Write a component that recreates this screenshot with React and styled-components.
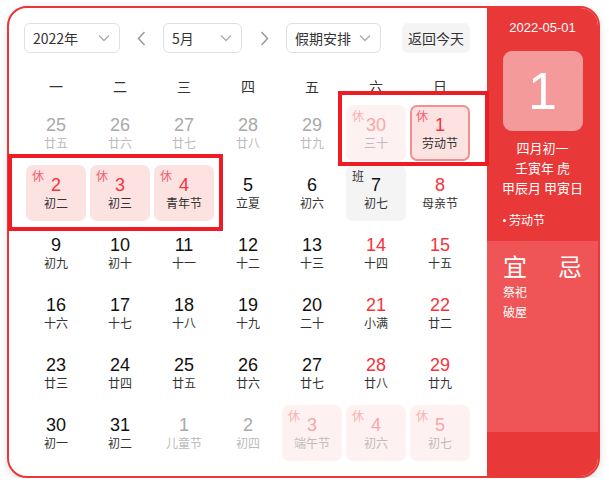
import React from "react";
import styled, { createGlobalStyle, css } from "styled-components";

const Global = createGlobalStyle`
  html, body { margin: 0; padding: 0; background: #fff; }
  body { font-family: "Liberation Sans", "Noto Sans CJK SC", sans-serif; color: #333; }
`;

const Page = styled.div`
  position: relative;
  padding: 6px 0 0 7px;
`;

const Card = styled.div`
  width: 593px;
  height: 472px;
  box-sizing: border-box;
  border: 2px solid #e93838;
  border-radius: 20px;
  overflow: hidden;
  display: flex;
  background: #fff;
  box-shadow: 0 3px 8px rgba(0, 0, 0, 0.12);
`;

const Left = styled.div`
  width: 478px;
  box-sizing: border-box;
  padding: 15px;
  display: flex;
  flex-direction: column;
`;

const Toolbar = styled.div`
  display: flex;
  align-items: center;
  height: 30px;
`;

const Select = styled.div`
  width: ${(p) => p.$w}px;
  height: 30px;
  box-sizing: border-box;
  border: 1px solid #dcdfe6;
  border-radius: 6px;
  display: flex;
  align-items: center;
  justify-content: space-between;
  padding: 0 9px 0 8px;
  font-size: 14px;
  color: #333;
  font-family: "Noto Sans CJK SC", sans-serif;
`;

const ArrowZone = styled.div`
  width: ${(p) => p.$w}px;
  display: flex;
  justify-content: center;
  align-items: center;
`;

const TodayButton = styled.div`
  margin-left: 21px;
  width: 68px;
  height: 30px;
  border-radius: 6px;
  background: #f4f4f5;
  display: flex;
  align-items: center;
  justify-content: center;
  font-size: 14px;
  color: #333;
  font-family: "Noto Sans CJK SC", sans-serif;
`;

const WeekHeader = styled.div`
  display: grid;
  grid-template-columns: repeat(7, 64px);
  height: 34px;
  margin: 16px 0 2px;
  align-items: center;
  justify-items: center;
  font-size: 14px;
  color: #333;
  font-family: "Noto Sans CJK SC", sans-serif;
`;

const Grid = styled.div`
  display: grid;
  grid-template-columns: repeat(7, 64px);
  grid-auto-rows: 56px;
  row-gap: 4px;
`;

const Cell = styled.div`
  position: relative;
  margin: 0 2px;
  box-sizing: border-box;
  border-radius: 7px;
  display: flex;
  flex-direction: column;
  align-items: center;
  padding-top: 9px;
  ${(p) =>
    p.$variant === "holiday" &&
    css`
      background: #fde2e2;
    `}
  ${(p) =>
    p.$variant === "fadedHoliday" &&
    css`
      background: #fef1f1;
    `}
  ${(p) =>
    p.$variant === "work" &&
    css`
      background: #f4f4f5;
    `}
  ${(p) =>
    p.$selected &&
    css`
      border: 2px solid #f38f8f;
      padding-top: 7px;
    `}
`;

const numColor = {
  normal: "#111",
  weekend: "#f5333a",
  muted: "#a9a9a9",
  holiday: "#f5333a",
  fadedHoliday: "#f8a7a7",
};

const lunarColor = {
  normal: "#333",
  muted: "#bbb",
  fadedHoliday: "#bdbdbd",
};

const Num = styled.div`
  font-size: 18px;
  line-height: 22px;
  font-family: "Liberation Sans", sans-serif;
  color: ${(p) => numColor[p.$tone]};
`;

const Lunar = styled.div`
  font-size: 12px;
  line-height: 14px;
  font-family: "Noto Sans CJK SC", sans-serif;
  color: ${(p) => lunarColor[p.$tone]};
`;

const Badge = styled.span`
  position: absolute;
  top: ${(p) => (p.$selected ? 1 : 3)}px;
  left: ${(p) => (p.$selected ? 4 : 6)}px;
  font-size: 12px;
  line-height: 16px;
  font-family: "Noto Sans CJK SC", sans-serif;
  color: ${(p) => p.$color};
`;

const Right = styled.div`
  flex: 1;
  background: #e93838;
  display: flex;
  flex-direction: column;
  color: #fff;
  font-family: "Noto Sans CJK SC", sans-serif;
`;

const Info = styled.div`
  padding: 10px 0 0;
  display: flex;
  flex-direction: column;
  align-items: center;
`;

const DateText = styled.div`
  font-family: "Liberation Sans", sans-serif;
  font-size: 13px;
  line-height: 20px;
`;

const BigDay = styled.div`
  margin-top: 13px;
  width: 80px;
  height: 80px;
  border-radius: 9px;
  background: #f49a9a;
  display: flex;
  align-items: center;
  justify-content: center;
  font-family: "Liberation Sans", sans-serif;
  font-size: 52px;
  color: #fff;
`;

const InfoLines = styled.div`
  margin-top: 7px;
  font-size: 13px;
  line-height: 20px;
  text-align: center;
  white-space: nowrap;
`;

const Festival = styled.div`
  align-self: stretch;
  margin: 12px 0 0 16px;
  font-size: 12px;
  line-height: 20px;
  height: 20px;
  display: flex;
  align-items: center;
  gap: 3px;
  &::before {
    content: "";
    width: 3px;
    height: 3px;
    border-radius: 50%;
    background: #fff;
  }
`;

const Advice = styled.div`
  margin-top: 11px;
  height: 182px;
  background: #ef5556;
  padding: 9px 16px 0;
  display: flex;
  justify-content: space-between;
`;

const AdviceCol = styled.div`
  display: flex;
  flex-direction: column;
`;

const AdviceTitle = styled.div`
  font-size: 24px;
  line-height: 32px;
`;

const AdviceItem = styled.div`
  font-size: 12px;
  line-height: 20px;
`;

const Annotation = styled.div`
  position: absolute;
  left: ${(p) => p.$x}px;
  top: ${(p) => p.$y}px;
  width: ${(p) => p.$w}px;
  height: ${(p) => p.$h}px;
  box-sizing: border-box;
  border: 4px solid #ee1c25;
  pointer-events: none;
`;

const ChevronDown = () => (
  <svg width="12" height="8" viewBox="0 0 12 8" fill="none">
    <polyline points="1,1.5 6,6.5 11,1.5" stroke="#a8abb2" strokeWidth="1.3" />
  </svg>
);

const ChevronSide = ({ dir }) => (
  <svg width="9" height="15" viewBox="0 0 9 15" fill="none">
    {dir === "left" ? (
      <polyline points="7.5,1 1.5,7.5 7.5,14" stroke="#999" strokeWidth="1.5" />
    ) : (
      <polyline points="1.5,1 7.5,7.5 1.5,14" stroke="#999" strokeWidth="1.5" />
    )}
  </svg>
);

// kind: n normal, m muted (other month), h holiday, f faded holiday, w work
const rows = [
  [
    ["25", "廿五", "m"],
    ["26", "廿六", "m"],
    ["27", "廿七", "m"],
    ["28", "廿八", "m"],
    ["29", "廿九", "m"],
    ["30", "三十", "f"],
    ["1", "劳动节", "h", true],
  ],
  [
    ["2", "初二", "h"],
    ["3", "初三", "h"],
    ["4", "青年节", "h"],
    ["5", "立夏", "n"],
    ["6", "初六", "n"],
    ["7", "初七", "w"],
    ["8", "母亲节", "n"],
  ],
  [
    ["9", "初九", "n"],
    ["10", "初十", "n"],
    ["11", "十一", "n"],
    ["12", "十二", "n"],
    ["13", "十三", "n"],
    ["14", "十四", "n"],
    ["15", "十五", "n"],
  ],
  [
    ["16", "十六", "n"],
    ["17", "十七", "n"],
    ["18", "十八", "n"],
    ["19", "十九", "n"],
    ["20", "二十", "n"],
    ["21", "小满", "n"],
    ["22", "廿二", "n"],
  ],
  [
    ["23", "廿三", "n"],
    ["24", "廿四", "n"],
    ["25", "廿五", "n"],
    ["26", "廿六", "n"],
    ["27", "廿七", "n"],
    ["28", "廿八", "n"],
    ["29", "廿九", "n"],
  ],
  [
    ["30", "初一", "n"],
    ["31", "初二", "n"],
    ["1", "儿童节", "m"],
    ["2", "初四", "m"],
    ["3", "端午节", "f"],
    ["4", "初六", "f"],
    ["5", "初七", "f"],
  ],
];

const weekdays = ["一", "二", "三", "四", "五", "六", "日"];

function DayCell({ num, lunar, kind, selected, weekend }) {
  let variant = "normal";
  let numTone = weekend ? "weekend" : "normal";
  let lunarTone = "normal";
  let badge = null;
  if (kind === "m") {
    numTone = "muted";
    lunarTone = "muted";
  } else if (kind === "h") {
    variant = "holiday";
    numTone = "holiday";
    badge = { text: "休", color: "#f5606a" };
  } else if (kind === "f") {
    variant = "fadedHoliday";
    numTone = "fadedHoliday";
    lunarTone = "fadedHoliday";
    badge = { text: "休", color: "#f8b2b2" };
  } else if (kind === "w") {
    variant = "work";
    numTone = "normal";
    badge = { text: "班", color: "#333" };
  }
  return (
    <Cell $variant={variant} $selected={selected}>
      {badge && (
        <Badge $color={badge.color} $selected={selected}>
          {badge.text}
        </Badge>
      )}
      <Num $tone={numTone}>{num}</Num>
      <Lunar $tone={lunarTone}>{lunar}</Lunar>
    </Cell>
  );
}

export default function App() {
  return (
    <>
      <Global />
      <Page>
        <Card>
          <Left>
            <Toolbar>
              <Select $w={96}>
                <span>2022年</span>
                <ChevronDown />
              </Select>
              <ArrowZone $w={43}>
                <ChevronSide dir="left" />
              </ArrowZone>
              <Select $w={79}>
                <span>5月</span>
                <ChevronDown />
              </Select>
              <ArrowZone $w={44}>
                <ChevronSide dir="right" />
              </ArrowZone>
              <Select $w={95}>
                <span>假期安排</span>
                <ChevronDown />
              </Select>
              <TodayButton>返回今天</TodayButton>
            </Toolbar>
            <WeekHeader>
              {weekdays.map((w) => (
                <div key={w}>{w}</div>
              ))}
            </WeekHeader>
            <Grid>
              {rows.map((row, ri) =>
                row.map(([num, lunar, kind, selected], ci) => (
                  <DayCell
                    key={`${ri}-${ci}`}
                    num={num}
                    lunar={lunar}
                    kind={kind}
                    selected={selected}
                    weekend={ci >= 5}
                  />
                ))
              )}
            </Grid>
          </Left>
          <Right>
            <Info>
              <DateText>2022-05-01</DateText>
              <BigDay>1</BigDay>
              <InfoLines>
                <div>四月初一</div>
                <div>壬寅年 虎</div>
                <div>甲辰月 甲寅日</div>
              </InfoLines>
              <Festival>劳动节</Festival>
            </Info>
            <Advice>
              <AdviceCol>
                <AdviceTitle>宜</AdviceTitle>
                <AdviceItem>祭祀</AdviceItem>
                <AdviceItem>破屋</AdviceItem>
              </AdviceCol>
              <AdviceCol>
                <AdviceTitle>忌</AdviceTitle>
              </AdviceCol>
            </Advice>
          </Right>
        </Card>
        <Annotation $x={338} $y={91} $w={151} $h={75} />
        <Annotation $x={8} $y={154} $w={215} $h={77} />
      </Page>
    </>
  );
}
